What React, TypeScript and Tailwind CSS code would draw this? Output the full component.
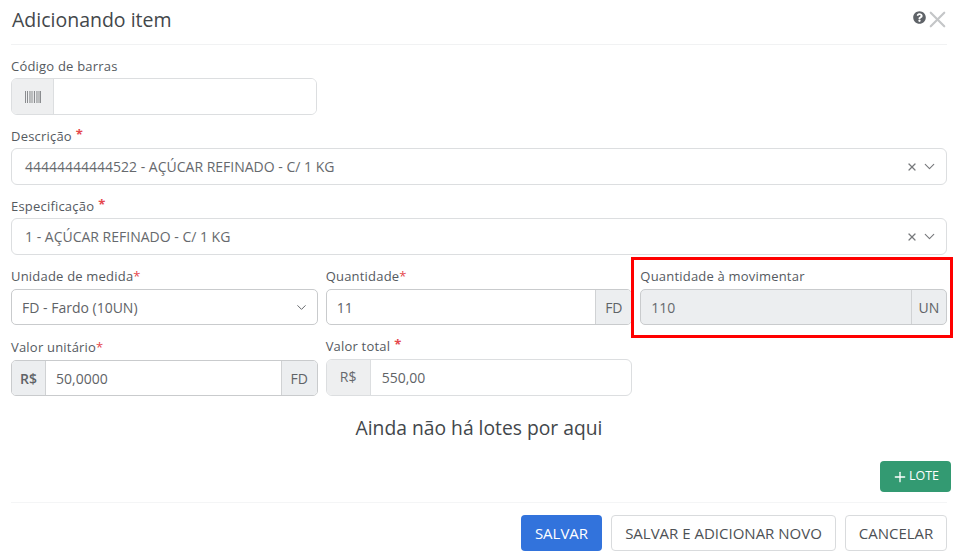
import { ChevronDown, Plus, X } from "lucide-react";
import { FaQuestionCircle } from "react-icons/fa";

const Req = ({ raised }: { raised?: boolean }) => (
  <span className={raised ? "ml-1 relative -top-[2px] font-bold text-[#e5484d]" : "text-[#e5484d]"}>*</span>
);

function Label({ text, req, raised }: { text: string; req?: boolean; raised?: boolean }) {
  return (
    <div className="h-[20px] text-[13px] leading-[20px] font-medium text-[#555a5f] tracking-[0.2px]">
      {text}
      {req && <Req raised={raised} />}
    </div>
  );
}

function Addon({ text, left, bold }: { text: string; left?: boolean; bold?: boolean }) {
  return (
    <div
      className={`flex items-center justify-center bg-[#eceef0] text-[14px] text-[#5f6367] border-[#d0d2d4] ${
        left ? "w-[34px] border-r" : "w-[36px] border-l"
      } ${bold ? "font-semibold" : ""}`}
    >
      {text}
    </div>
  );
}

function SelectBox({ value }: { value: string }) {
  return (
    <div className="h-[37px] flex items-center rounded-[6px] border border-[#dcdee0] bg-white pl-[13px] pr-[8px] text-[14px] text-[#66696d]">
      <span className="flex-1">{value}</span>
      <X size={12} strokeWidth={2.4} className="text-[#77797c]" />
      <ChevronDown size={17} strokeWidth={1.6} className="ml-[3px] text-[#77797c]" />
    </div>
  );
}

export default function App() {
  return (
    <div className="relative w-[959px] h-[555px] overflow-hidden bg-white font-['Open_Sans',sans-serif]">
      <div className="pl-[11px] pr-[12px]">
        {/* Header */}
        <div className="h-[45px] flex items-start justify-between border-b border-[#f1f2f3]">
          <h1 className="ml-px mt-[7px] text-[19.5px] leading-[26px] text-[#43474b]">Adicionando item</h1>
          <div className="flex items-start mt-[9px] -mr-[4px]">
            <FaQuestionCircle size={13} className="mt-[2px] text-[#5f6368]" />
            <X size={27} strokeWidth={1.9} className="-mt-[3px] -ml-[2px] text-[#c4c6c8]" />
          </div>
        </div>

        <div className="pt-[11px]">
          <Label text="Código de barras" />
          <div className="mt-[2px] w-[306px] h-[37px] flex rounded-[6px] border border-[#dcdee0] overflow-hidden">
            <div className="w-[42px] flex items-center justify-center bg-[#eeeff0] border-r border-[#dcdee0]">
              <svg width="16" height="12" viewBox="0 0 16 12" className="text-[#8a8c8f]">
                <path
                  d="M0 0h1v12H0zM2 0h1v12H2zM4 0h.6v12H4zM5.5 0h1v12h-1zM7.5 0h.6v12h-.6zM9 0h1v12H9zM11 0h.6v12H11zM12.5 0h1v12h-1zM14.5 0h1.5v12h-1.5z"
                  fill="currentColor"
                />
              </svg>
            </div>
            <div className="flex-1 bg-white" />
          </div>
        </div>

        <div className="mt-[11px]">
          <Label text="Descrição" req raised />
          <div className="mt-[2px]">
            <SelectBox value="44444444444522 - AÇÚCAR REFINADO - C/ 1 KG" />
          </div>
        </div>

        <div className="mt-[11px]">
          <Label text="Especificação" req raised />
          <div className="mt-[2px]">
            <SelectBox value="1 - AÇÚCAR REFINADO - C/ 1 KG" />
          </div>
        </div>

        {/* Quantities */}
        <div className="mt-[11px] grid grid-cols-3 gap-x-[8px]">
          <div>
            <Label text="Unidade de medida" req />
            <div className="mt-[3px] h-[36px] flex items-center rounded-[5px] border border-[#c9cbcd] pl-[10px] pr-[8px] text-[14px] text-[#5f6367]">
              <span className="flex-1">FD - Fardo (10UN)</span>
              <ChevronDown size={15} strokeWidth={1.6} className="text-[#66696d]" />
            </div>
          </div>
          <div>
            <Label text="Quantidade" req />
            <div className="mt-[3px] h-[36px] flex rounded-[5px] border border-[#c9cbcd] overflow-hidden text-[14px]">
              <div className="flex-1 flex items-center pl-[10px] text-[#5f6367]">11</div>
              <Addon text="FD" />
            </div>
          </div>
          <div>
            <Label text="Quantidade à movimentar" />
            <div className="mt-[3px] h-[36px] flex rounded-[5px] border border-[#c9cbcd] overflow-hidden text-[14px] bg-[#eceef0]">
              <div className="flex-1 flex items-center pl-[10px] text-[#66696d]">110</div>
              <div className="w-[35px] flex items-center justify-center border-l border-[#d0d2d4] text-[#5f6367]">UN</div>
            </div>
          </div>
        </div>

        <div className="mt-[12px] grid grid-cols-3 gap-x-[8px]">
          <div>
            <Label text="Valor unitário" req />
            <div className="mt-[3px] h-[36px] flex rounded-[5px] border border-[#c9cbcd] overflow-hidden text-[14px]">
              <Addon text="R$" left bold />
              <div className="flex-1 flex items-center pl-[10px] text-[#5f6367]">50,0000</div>
              <Addon text="FD" />
            </div>
          </div>
          <div className="-mt-[1px]">
            <Label text="Valor total" req raised />
            <div className="mt-[3px] h-[37px] flex rounded-[6px] border border-[#dcdee0] overflow-hidden text-[14px]">
              <div className="w-[44px] pt-[6px] text-center bg-[#eeeff0] border-r border-[#dcdee0] text-[#66696d]">R$</div>
              <div className="flex-1 flex items-center pl-[11px] text-[#5f6367]">550,00</div>
            </div>
          </div>
        </div>

        <p className="mt-[20px] text-center text-[19.3px] leading-[24px] text-[#43474b]">Ainda não há lotes por aqui</p>

        <div className="mt-[21px] flex justify-end -mr-[4px]">
          <button className="w-[71px] h-[31px] flex items-center justify-center rounded-[4px] bg-[#339a72] text-[12.5px] text-white">
            <Plus size={16} strokeWidth={2} className="mr-[1px]" />
            LOTE
          </button>
        </div>

        {/* Footer */}
        <div className="mt-[10px] pt-[12px] flex justify-end gap-[9px] border-t border-[#f4f5f6] text-[15px]">
          <button className="h-[36px] w-[81px] rounded-[4px] bg-[#3273dc] text-white">SALVAR</button>
          <button className="h-[36px] w-[225px] rounded-[4px] border border-[#d9dbdd] text-[#4d5155]">SALVAR E ADICIONAR NOVO</button>
          <button className="h-[36px] w-[102px] rounded-[4px] border border-[#d9dbdd] text-[#4d5155]">CANCELAR</button>
        </div>
      </div>

      {/* Red annotation around the field */}
      <div className="absolute left-[631px] top-[257px] w-[322px] h-[81px] border-[3px] border-[#ff0000]" />
    </div>
  );
}
